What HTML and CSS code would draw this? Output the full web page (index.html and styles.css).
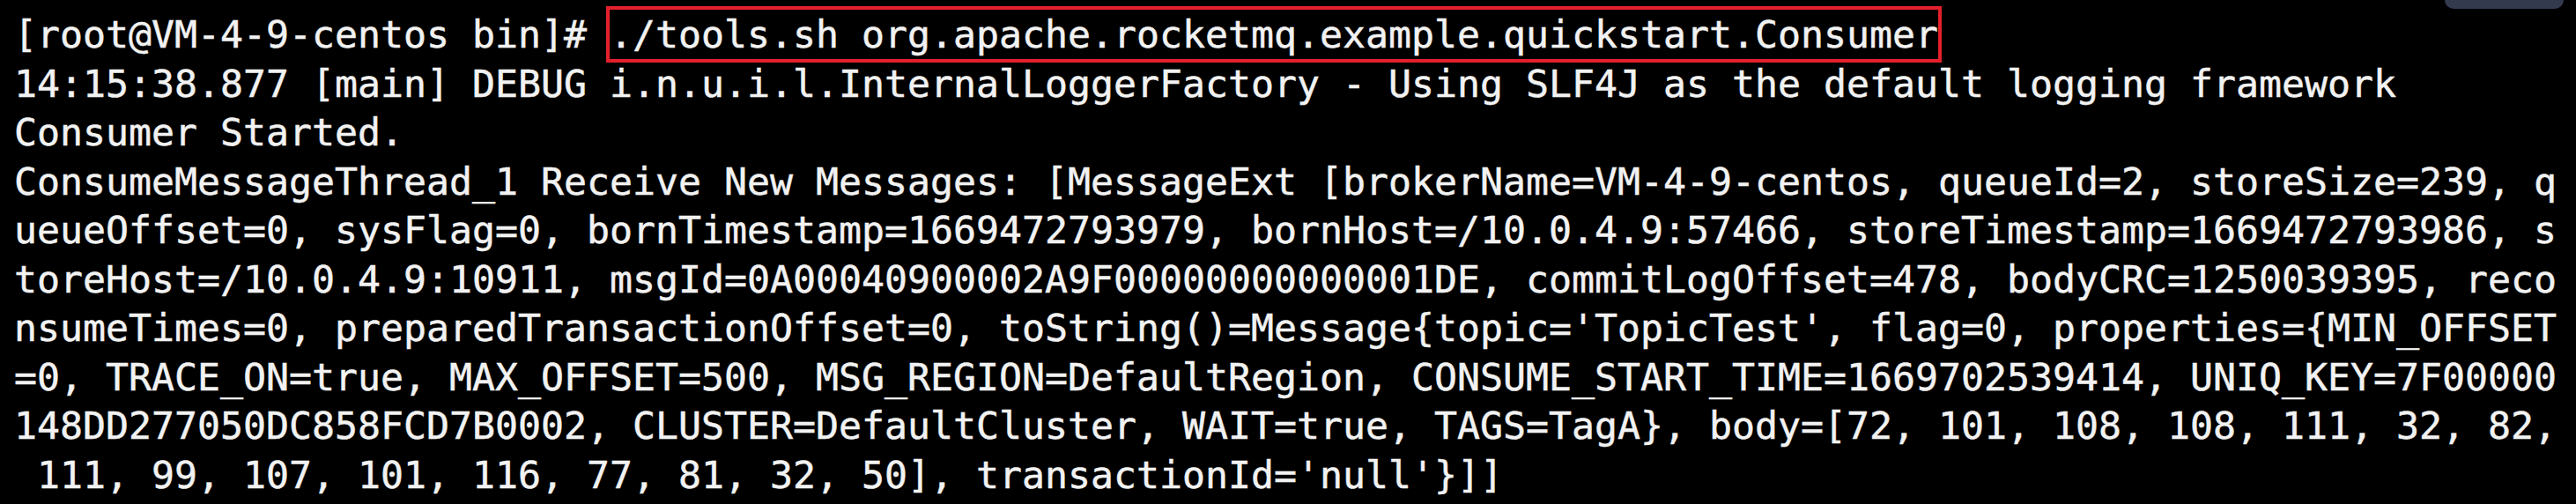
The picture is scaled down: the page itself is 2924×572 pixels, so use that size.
FILE: index.html
```html
<!DOCTYPE html>
<html lang="en">
<head>
    <meta charset="UTF-8">
    <title>Terminal - rocketmq consumer</title>
    <link rel="stylesheet" href="styles.css">
</head>
<body>
    <div class="terminal">
        <div class="tab-peek"></div>
        <div class="line">[root@VM-4-9-centos bin]# <span class="mark">./tools.sh org.apache.rocketmq.example.quickstart.Consumer</span></div>
        <div class="line">14:15:38.877 [main] DEBUG i.n.u.i.l.InternalLoggerFactory - Using SLF4J as the default logging framework</div>
        <div class="line">Consumer Started.</div>
        <div class="line">ConsumeMessageThread_1 Receive New Messages: [MessageExt [brokerName=VM-4-9-centos, queueId=2, storeSize=239, q</div>
        <div class="line">ueueOffset=0, sysFlag=0, bornTimestamp=1669472793979, bornHost=/10.0.4.9:57466, storeTimestamp=1669472793986, s</div>
        <div class="line">toreHost=/10.0.4.9:10911, msgId=0A00040900002A9F00000000000001DE, commitLogOffset=478, bodyCRC=1250039395, reco</div>
        <div class="line">nsumeTimes=0, preparedTransactionOffset=0, toString()=Message{topic='TopicTest', flag=0, properties={MIN_OFFSET</div>
        <div class="line">=0, TRACE_ON=true, MAX_OFFSET=500, MSG_REGION=DefaultRegion, CONSUME_START_TIME=1669702539414, UNIQ_KEY=7F00000</div>
        <div class="line">148DD277050DC858FCD7B0002, CLUSTER=DefaultCluster, WAIT=true, TAGS=TagA}, body=[72, 101, 108, 108, 111, 32, 82,</div>
        <div class="line"> 111, 99, 107, 101, 116, 77, 81, 32, 50], transactionId='null'}]]</div>
    </div>
</body>
</html>
```

FILE: styles.css
```css
html, body {
    margin: 0;
    padding: 0;
    background: #000;
}

.terminal {
    position: relative;
    width: 2924px;
    height: 572px;
    box-sizing: border-box;
    padding: 12px 0 0 16px;
    background: #000;
    color: #f2f2f2;
    font-family: 'DejaVu Sans Mono', 'Liberation Mono', monospace;
    font-size: 43.2px;
    line-height: 55.5px;
    -webkit-text-stroke: 0.5px #f2f2f2;
    overflow: hidden;
}

.line {
    white-space: pre;
}

.mark {
    padding: 3px 0;
    outline: 4px solid #e3202b;
    outline-offset: 0;
}

/* bit of the tab bar peeking in from above */
.tab-peek {
    position: absolute;
    top: -20px;
    left: 2775px;
    width: 135px;
    height: 30px;
    background: #343a4e;
    border-radius: 0 0 10px 10px;
}
```
